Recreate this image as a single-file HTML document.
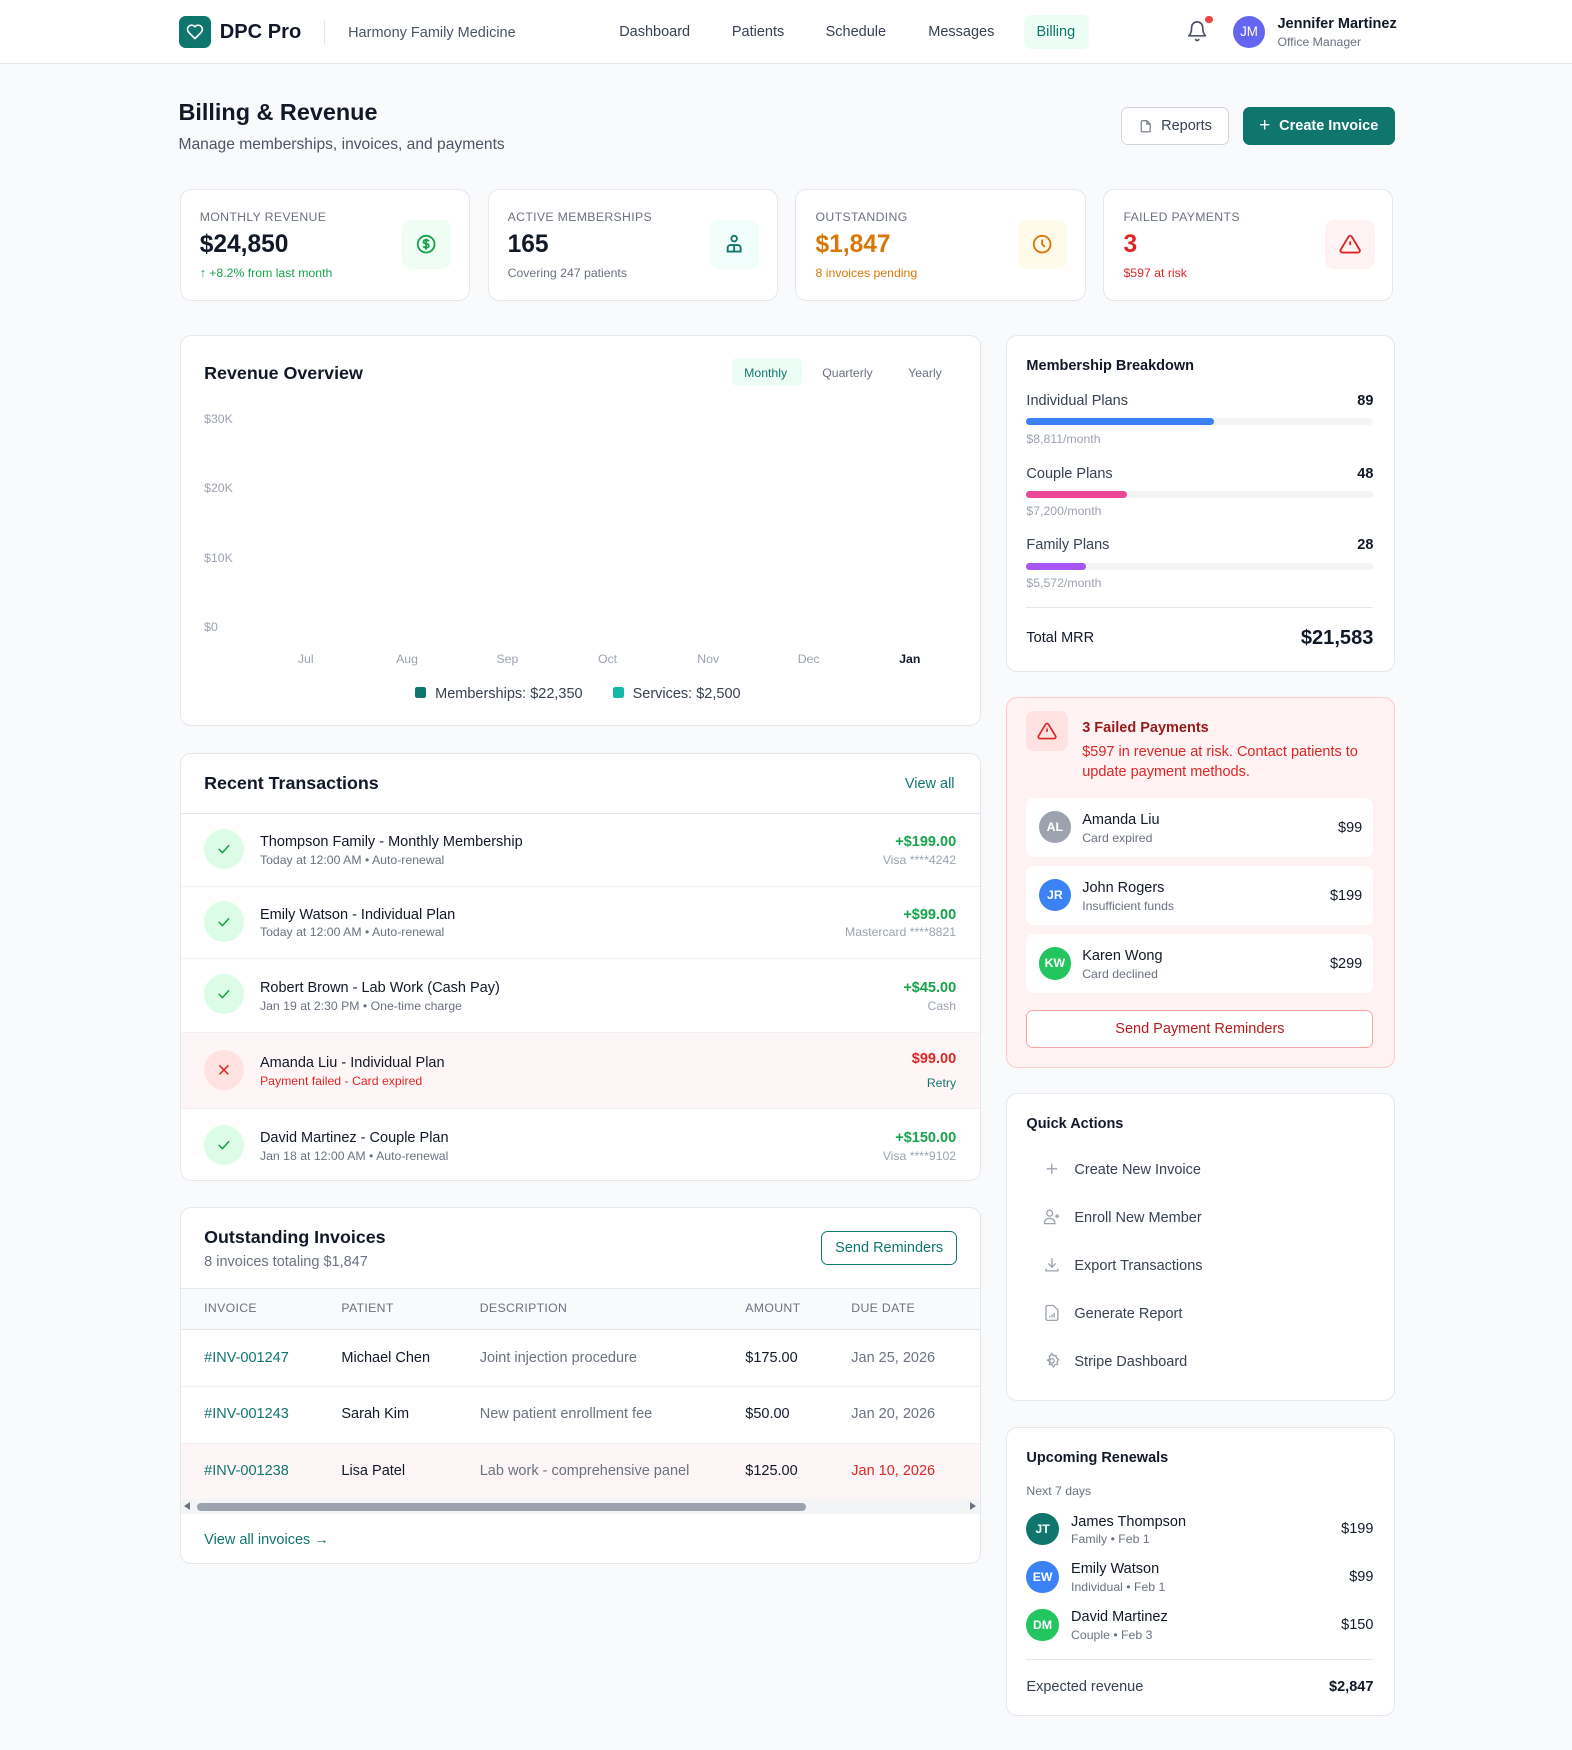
<!DOCTYPE html>
<html><head><meta charset="utf-8">
<style>
*{box-sizing:border-box;margin:0;padding:0}
html,body{width:1572px;height:1750px;overflow:hidden;background:#f9fafb}
body{font-family:"Liberation Sans",Arial,sans-serif;color:#111827}
#r{position:relative;width:1409px;height:1568px;zoom:1.11568}
.a{position:absolute}
.t{position:absolute;white-space:nowrap;line-height:20px;transform:translateY(1px)}
.card{position:absolute;background:#fff;border:1px solid #e5e7eb;border-radius:10px}
.g{color:#6b7280}
.b{font-weight:bold}
.ic{position:absolute;width:44px;height:44px;border-radius:8px;display:flex;align-items:center;justify-content:center}
.lbl{font-size:11px;color:#6b7280;letter-spacing:.3px}
.circ{position:absolute;width:36px;height:36px;border-radius:50%;display:flex;align-items:center;justify-content:center}
.av{position:absolute;border-radius:50%;color:#fff;font-weight:bold;display:flex;align-items:center;justify-content:center}
.hr{position:absolute;height:1px;background:#f0f1f3}
</style></head><body><div id="r">

<div class="a" style="left:0;top:0;width:1409px;height:57px;background:#fff;border-bottom:1px solid #e5e7eb"></div>
<div class="a" style="left:160px;top:14px;width:29px;height:29px;background:#0f766e;border-radius:6px;display:flex;align-items:center;justify-content:center">
<svg width="16" height="16" viewBox="0 0 24 24" fill="none" stroke="#fff" stroke-width="2.2" stroke-linecap="round" stroke-linejoin="round"><path d="M19 14c1.5-1.5 3-3.2 3-5.5A5.5 5.5 0 0 0 16.5 3c-1.8 0-3 .5-4.5 2-1.5-1.5-2.7-2-4.5-2A5.5 5.5 0 0 0 2 8.5c0 2.3 1.5 4 3 5.5l7 7Z"/></svg></div>
<div class="t b" style="left:197px;top:18px;font-size:18px">DPC Pro</div>
<div class="a" style="left:290px;top:18px;width:1px;height:22px;background:#e5e7eb"></div>
<div class="t g" style="left:312px;top:19px;font-size:13px;color:#4b5563">Harmony Family Medicine</div>
<div class="t" style="left:555px;top:18px;font-size:13px;color:#374151">Dashboard</div>
<div class="t" style="left:656px;top:18px;font-size:13px;color:#374151">Patients</div>
<div class="t" style="left:740px;top:18px;font-size:13px;color:#374151">Schedule</div>
<div class="t" style="left:832px;top:18px;font-size:13px;color:#374151">Messages</div>
<div class="a" style="left:918px;top:13px;width:58px;height:31px;background:#ecfdf5;border-radius:6px"></div>
<div class="t" style="left:929px;top:18px;font-size:13px;color:#0f766e">Billing</div>
<svg class="a" style="left:1063px;top:18px" width="20" height="20" viewBox="0 0 24 24" fill="none" stroke="#4b5563" stroke-width="1.8" stroke-linecap="round" stroke-linejoin="round"><path d="M6 8a6 6 0 0 1 12 0c0 7 3 9 3 9H3s3-2 3-9"/><path d="M10.3 21a1.9 1.9 0 0 0 3.4 0"/></svg>
<div class="a" style="left:1080px;top:14px;width:7px;height:7px;border-radius:50%;background:#ef4444"></div>
<div class="av" style="left:1105px;top:14px;width:29px;height:29px;background:#6366f1;font-size:12px;font-weight:normal">JM</div>
<div class="t b" style="left:1145px;top:11px;font-size:13px;color:#111827">Jennifer Martinez</div>
<div class="t g" style="left:1145px;top:27px;font-size:11px">Office Manager</div>

<div class="t b" style="left:160px;top:88px;font-size:21px;line-height:24px">Billing &amp; Revenue</div>
<div class="t" style="left:160px;top:119px;font-size:14px;color:#4b5563">Manage memberships, invoices, and payments</div>
<div class="a" style="left:1005px;top:96px;width:97px;height:34px;border:1px solid #d1d5db;border-radius:6px;background:#fff;display:flex;align-items:center;justify-content:center;gap:8px;font-size:13px;color:#374151">
<svg width="12" height="13" viewBox="0 0 24 24" fill="none" stroke="#6b7280" stroke-width="2"><path d="M14 2H6a2 2 0 0 0-2 2v16a2 2 0 0 0 2 2h12a2 2 0 0 0 2-2V8z"/><path d="M14 2v6h6"/></svg>Reports</div>
<div class="a" style="left:1114px;top:96px;width:136px;height:34px;border-radius:6px;background:#0f766e;display:flex;align-items:center;justify-content:center;gap:8px;font-size:13px;color:#fff;font-weight:bold">
<span style="font-size:17px;font-weight:normal">+</span>Create Invoice</div>

<div class="card" style="left:161px;top:169px;width:260px;height:101px"></div>
<div class="t lbl" style="left:179px;top:184px">MONTHLY REVENUE</div>
<div class="t b" style="left:179px;top:207px;font-size:22px;line-height:24px">$24,850</div>
<div class="t" style="left:179px;top:234px;font-size:11px;color:#16a34a">↑ +8.2% from last month</div>
<div class="ic" style="left:360px;top:197px;background:#f0fdf4"><svg width="20" height="20" viewBox="0 0 24 24" fill="none" stroke="#16a34a" stroke-width="2"><circle cx="12" cy="12" r="9"/><path d="M15 9c-.5-1-1.5-1.5-3-1.5-1.7 0-2.8.8-2.8 2s1 1.7 2.8 2c1.8.3 2.9.9 2.9 2.2s-1.2 2.1-2.9 2.1c-1.5 0-2.6-.6-3-1.6M12 6v12"/></svg></div>

<div class="card" style="left:437px;top:169px;width:260px;height:101px"></div>
<div class="t lbl" style="left:455px;top:184px">ACTIVE MEMBERSHIPS</div>
<div class="t b" style="left:455px;top:207px;font-size:22px;line-height:24px">165</div>
<div class="t g" style="left:455px;top:234px;font-size:11px">Covering 247 patients</div>
<div class="ic" style="left:636px;top:197px;background:#f0fdfa"><svg width="20" height="20" viewBox="0 0 24 24" fill="none" stroke="#0f766e" stroke-width="2"><circle cx="12" cy="6" r="3"/><path d="M5 20v-4a3 3 0 0 1 3-3h8a3 3 0 0 1 3 3v4zM12 13v7"/></svg></div>

<div class="card" style="left:713px;top:169px;width:260px;height:101px"></div>
<div class="t lbl" style="left:731px;top:184px">OUTSTANDING</div>
<div class="t b" style="left:731px;top:207px;font-size:22px;line-height:24px;color:#d97706">$1,847</div>
<div class="t" style="left:731px;top:234px;font-size:11px;color:#d97706">8 invoices pending</div>
<div class="ic" style="left:912px;top:197px;background:#fffbeb"><svg width="20" height="20" viewBox="0 0 24 24" fill="none" stroke="#d97706" stroke-width="2"><circle cx="12" cy="12" r="9"/><path d="M12 7v5l3 3"/></svg></div>

<div class="card" style="left:989px;top:169px;width:260px;height:101px"></div>
<div class="t lbl" style="left:1007px;top:184px">FAILED PAYMENTS</div>
<div class="t b" style="left:1007px;top:207px;font-size:22px;line-height:24px;color:#dc2626">3</div>
<div class="t" style="left:1007px;top:234px;font-size:11px;color:#dc2626">$597 at risk</div>
<div class="ic" style="left:1188px;top:197px;background:#fef2f2"><svg width="20" height="20" viewBox="0 0 24 24" fill="none" stroke="#dc2626" stroke-width="2"><path d="M10.3 3.9 1.8 18a2 2 0 0 0 1.7 3h17a2 2 0 0 0 1.7-3L13.7 3.9a2 2 0 0 0-3.4 0zM12 9v4M12 17h.01"/></svg></div>

<div class="card" style="left:161px;top:300px;width:718px;height:351px"></div>
<div class="t b" style="left:183px;top:324px;font-size:16px">Revenue Overview</div>
<div class="a" style="left:656px;top:321px;width:63px;height:25px;background:#ecfdf5;border-radius:5px"></div>
<div class="t" style="left:667px;top:324px;font-size:11px;color:#0f766e">Monthly</div>
<div class="t g" style="left:737px;top:324px;font-size:11px">Quarterly</div>
<div class="t g" style="left:814px;top:324px;font-size:11px">Yearly</div>
<div class="t" style="left:183px;top:365px;font-size:11px;color:#9ca3af">$30K</div>
<div class="t" style="left:183px;top:427px;font-size:11px;color:#9ca3af">$20K</div>
<div class="t" style="left:183px;top:489px;font-size:11px;color:#9ca3af">$10K</div>
<div class="t" style="left:183px;top:551px;font-size:11px;color:#9ca3af">$0</div>
<div class="t" style="left:267px;top:580px;font-size:11px;color:#9ca3af">Jul</div>
<div class="t" style="left:355px;top:580px;font-size:11px;color:#9ca3af">Aug</div>
<div class="t" style="left:445px;top:580px;font-size:11px;color:#9ca3af">Sep</div>
<div class="t" style="left:536px;top:580px;font-size:11px;color:#9ca3af">Oct</div>
<div class="t" style="left:625px;top:580px;font-size:11px;color:#9ca3af">Nov</div>
<div class="t" style="left:715px;top:580px;font-size:11px;color:#9ca3af">Dec</div>
<div class="t b" style="left:806px;top:580px;font-size:11px;color:#111827">Jan</div>
<div class="a" style="left:372px;top:616px;width:10px;height:10px;border-radius:2px;background:#0f766e"></div>
<div class="t" style="left:390px;top:611px;font-size:13px;color:#374151">Memberships: $22,350</div>
<div class="a" style="left:549px;top:616px;width:10px;height:10px;border-radius:2px;background:#14b8a6"></div>
<div class="t" style="left:567px;top:611px;font-size:13px;color:#374151">Services: $2,500</div>

<div class="card" style="left:161px;top:675px;width:718px;height:384px;overflow:hidden">
<div class="a" style="left:0;top:250px;width:718px;height:68px;background:#fef6f6"></div>
</div>
<div class="t b" style="left:183px;top:691px;font-size:16px">Recent Transactions</div>
<div class="t" style="left:811px;top:692px;font-size:13px;color:#0f766e">View all</div>
<div class="hr" style="left:162px;top:729px;width:716px;background:#e5e7eb"></div>
<div class="hr" style="left:162px;top:794px;width:716px"></div>
<div class="hr" style="left:162px;top:859px;width:716px"></div>
<div class="hr" style="left:162px;top:925px;width:716px"></div>
<div class="hr" style="left:162px;top:993px;width:716px"></div>

<div class="circ" style="left:183px;top:743px;background:#dcfce7"><svg width="16" height="16" viewBox="0 0 24 24" fill="none" stroke="#16a34a" stroke-width="2"><path d="M5 12l5 5 9-10"/></svg></div>
<div class="t" style="left:233px;top:744px;font-size:13px">Thompson Family - Monthly Membership</div>
<div class="t g" style="left:233px;top:760px;font-size:11px">Today at 12:00 AM • Auto-renewal</div>
<div class="t b" style="right:552px;top:744px;font-size:13px;color:#16a34a">+$199.00</div>
<div class="t" style="right:552px;top:760px;font-size:11px;color:#9ca3af">Visa ****4242</div>

<div class="circ" style="left:183px;top:808px;background:#dcfce7"><svg width="16" height="16" viewBox="0 0 24 24" fill="none" stroke="#16a34a" stroke-width="2"><path d="M5 12l5 5 9-10"/></svg></div>
<div class="t" style="left:233px;top:809px;font-size:13px">Emily Watson - Individual Plan</div>
<div class="t g" style="left:233px;top:825px;font-size:11px">Today at 12:00 AM • Auto-renewal</div>
<div class="t b" style="right:552px;top:809px;font-size:13px;color:#16a34a">+$99.00</div>
<div class="t" style="right:552px;top:825px;font-size:11px;color:#9ca3af">Mastercard ****8821</div>

<div class="circ" style="left:183px;top:873px;background:#dcfce7"><svg width="16" height="16" viewBox="0 0 24 24" fill="none" stroke="#16a34a" stroke-width="2"><path d="M5 12l5 5 9-10"/></svg></div>
<div class="t" style="left:233px;top:875px;font-size:13px">Robert Brown - Lab Work (Cash Pay)</div>
<div class="t g" style="left:233px;top:891px;font-size:11px">Jan 19 at 2:30 PM • One-time charge</div>
<div class="t b" style="right:552px;top:875px;font-size:13px;color:#16a34a">+$45.00</div>
<div class="t" style="right:552px;top:891px;font-size:11px;color:#9ca3af">Cash</div>

<div class="circ" style="left:183px;top:941px;background:#fee2e2"><svg width="16" height="16" viewBox="0 0 24 24" fill="none" stroke="#dc2626" stroke-width="2"><path d="M6 6l12 12M18 6 6 18"/></svg></div>
<div class="t" style="left:233px;top:942px;font-size:13px">Amanda Liu - Individual Plan</div>
<div class="t" style="left:233px;top:958px;font-size:11px;color:#dc2626">Payment failed - Card expired</div>
<div class="t b" style="right:552px;top:938px;font-size:13px;color:#dc2626">$99.00</div>
<div class="t" style="right:552px;top:960px;font-size:11px;color:#0f766e">Retry</div>

<div class="circ" style="left:183px;top:1008px;background:#dcfce7"><svg width="16" height="16" viewBox="0 0 24 24" fill="none" stroke="#16a34a" stroke-width="2"><path d="M5 12l5 5 9-10"/></svg></div>
<div class="t" style="left:233px;top:1009px;font-size:13px">David Martinez - Couple Plan</div>
<div class="t g" style="left:233px;top:1025px;font-size:11px">Jan 18 at 12:00 AM • Auto-renewal</div>
<div class="t b" style="right:552px;top:1009px;font-size:13px;color:#16a34a">+$150.00</div>
<div class="t" style="right:552px;top:1025px;font-size:11px;color:#9ca3af">Visa ****9102</div>

<div class="card" style="left:161px;top:1082px;width:718px;height:320px;overflow:hidden">
<div class="a" style="left:0;top:72px;width:718px;height:37px;background:#f9fafb;border-top:1px solid #e5e7eb;border-bottom:1px solid #e5e7eb"></div>
<div class="a" style="left:0;top:211px;width:718px;height:51px;background:#fef6f6"></div>
</div>
<div class="t b" style="left:183px;top:1098px;font-size:16px">Outstanding Invoices</div>
<div class="t g" style="left:183px;top:1120px;font-size:13px">8 invoices totaling $1,847</div>
<div class="a" style="left:736px;top:1103px;width:122px;height:31px;border:1px solid #0f766e;border-radius:6px;color:#0f766e;font-size:13px;display:flex;align-items:center;justify-content:center">Send Reminders</div>
<div class="t lbl" style="left:183px;top:1162px">INVOICE</div>
<div class="t lbl" style="left:306px;top:1162px">PATIENT</div>
<div class="t lbl" style="left:430px;top:1162px">DESCRIPTION</div>
<div class="t lbl" style="left:668px;top:1162px">AMOUNT</div>
<div class="t lbl" style="left:763px;top:1162px">DUE DATE</div>
<div class="hr" style="left:162px;top:1242px;width:716px"></div>
<div class="hr" style="left:162px;top:1293px;width:716px"></div>
<div class="t" style="left:183px;top:1206px;font-size:13px;color:#0f766e">#INV-001247</div>
<div class="t" style="left:306px;top:1206px;font-size:13px">Michael Chen</div>
<div class="t" style="left:430px;top:1206px;font-size:13px;color:#6b7280">Joint injection procedure</div>
<div class="t" style="left:668px;top:1206px;font-size:13px">$175.00</div>
<div class="t" style="left:763px;top:1206px;font-size:13px;color:#6b7280">Jan 25, 2026</div>
<div class="t" style="left:183px;top:1257px;font-size:13px;color:#0f766e">#INV-001243</div>
<div class="t" style="left:306px;top:1257px;font-size:13px">Sarah Kim</div>
<div class="t" style="left:430px;top:1257px;font-size:13px;color:#6b7280">New patient enrollment fee</div>
<div class="t" style="left:668px;top:1257px;font-size:13px">$50.00</div>
<div class="t" style="left:763px;top:1257px;font-size:13px;color:#6b7280">Jan 20, 2026</div>
<div class="t" style="left:183px;top:1308px;font-size:13px;color:#0f766e">#INV-001238</div>
<div class="t" style="left:306px;top:1308px;font-size:13px">Lisa Patel</div>
<div class="t" style="left:430px;top:1308px;font-size:13px;color:#6b7280">Lab work - comprehensive panel</div>
<div class="t" style="left:668px;top:1308px;font-size:13px">$125.00</div>
<div class="t" style="left:763px;top:1308px;font-size:13px;color:#dc2626">Jan 10, 2026</div>
<div class="a" style="left:162px;top:1344px;width:716px;height:13px;background:#f3f4f6"></div>
<div class="a" style="left:177px;top:1347px;width:545px;height:7px;background:#9ca3af;border-radius:4px"></div>
<div class="a" style="left:165px;top:1346px;width:0;height:0;border-top:4px solid transparent;border-bottom:4px solid transparent;border-right:6px solid #6b7280"></div>
<div class="a" style="left:869px;top:1346px;width:0;height:0;border-top:4px solid transparent;border-bottom:4px solid transparent;border-left:6px solid #6b7280"></div>
<div class="t" style="left:183px;top:1370px;font-size:13px;color:#0f766e">View all invoices →</div>

<div class="card" style="left:902px;top:300px;width:348px;height:302px"></div>
<div class="t b" style="left:920px;top:317px;font-size:13px">Membership Breakdown</div>
<div class="t" style="left:920px;top:349px;font-size:13px;color:#374151">Individual Plans</div>
<div class="t b" style="right:178px;top:349px;font-size:13px">89</div>
<div class="a" style="left:920px;top:375px;width:311px;height:6px;background:#f3f4f6;border-radius:3px"><div style="width:168px;height:6px;background:#3b82f6;border-radius:3px"></div></div>
<div class="t" style="left:920px;top:383px;font-size:11px;color:#9ca3af">$8,811/month</div>
<div class="t" style="left:920px;top:414px;font-size:13px;color:#374151">Couple Plans</div>
<div class="t b" style="right:178px;top:414px;font-size:13px">48</div>
<div class="a" style="left:920px;top:440px;width:311px;height:6px;background:#f3f4f6;border-radius:3px"><div style="width:90px;height:6px;background:#ec4899;border-radius:3px"></div></div>
<div class="t" style="left:920px;top:447px;font-size:11px;color:#9ca3af">$7,200/month</div>
<div class="t" style="left:920px;top:478px;font-size:13px;color:#374151">Family Plans</div>
<div class="t b" style="right:178px;top:478px;font-size:13px">28</div>
<div class="a" style="left:920px;top:505px;width:311px;height:6px;background:#f3f4f6;border-radius:3px"><div style="width:53px;height:6px;background:#a855f7;border-radius:3px"></div></div>
<div class="t" style="left:920px;top:512px;font-size:11px;color:#9ca3af">$5,572/month</div>
<div class="hr" style="left:920px;top:544px;width:311px;background:#e5e7eb"></div>
<div class="t" style="left:920px;top:561px;font-size:13px">Total MRR</div>
<div class="t b" style="right:178px;top:561px;font-size:18px">$21,583</div>

<div class="a" style="left:902px;top:625px;width:348px;height:332px;background:#fef2f2;border:1px solid #fecaca;border-radius:10px"></div>
<div class="a" style="left:920px;top:637px;width:37px;height:36px;background:#fee2e2;border-radius:7px;display:flex;align-items:center;justify-content:center"><svg width="18" height="18" viewBox="0 0 24 24" fill="none" stroke="#dc2626" stroke-width="2"><path d="M10.3 3.9 1.8 18a2 2 0 0 0 1.7 3h17a2 2 0 0 0 1.7-3L13.7 3.9a2 2 0 0 0-3.4 0zM12 9v4M12 17h.01"/></svg></div>
<div class="t b" style="left:970px;top:642px;font-size:13px;color:#991b1b">3 Failed Payments</div>
<div class="a" style="left:970px;top:665px;width:270px;font-size:13px;line-height:18px;color:#dc2626">$597 in revenue at risk. Contact patients to update payment methods.</div>
<div class="a" style="left:920px;top:715px;width:311px;height:53px;background:#fff;border-radius:7px"></div>
<div class="av" style="left:931px;top:727px;width:29px;height:29px;background:#9ca3af;font-size:11px">AL</div>
<div class="t" style="left:970px;top:724px;font-size:13px">Amanda Liu</div>
<div class="t g" style="left:970px;top:740px;font-size:11px">Card expired</div>
<div class="t" style="right:188px;top:731px;font-size:13px">$99</div>
<div class="a" style="left:920px;top:776px;width:311px;height:53px;background:#fff;border-radius:7px"></div>
<div class="av" style="left:931px;top:788px;width:29px;height:29px;background:#3b82f6;font-size:11px">JR</div>
<div class="t" style="left:970px;top:785px;font-size:13px">John Rogers</div>
<div class="t g" style="left:970px;top:801px;font-size:11px">Insufficient funds</div>
<div class="t" style="right:188px;top:792px;font-size:13px">$199</div>
<div class="a" style="left:920px;top:837px;width:311px;height:53px;background:#fff;border-radius:7px"></div>
<div class="av" style="left:931px;top:849px;width:29px;height:29px;background:#22c55e;font-size:11px">KW</div>
<div class="t" style="left:970px;top:846px;font-size:13px">Karen Wong</div>
<div class="t g" style="left:970px;top:862px;font-size:11px">Card declined</div>
<div class="t" style="right:188px;top:853px;font-size:13px">$299</div>
<div class="a" style="left:920px;top:905px;width:311px;height:34px;background:#fff;border:1px solid #fca5a5;border-radius:6px;display:flex;align-items:center;justify-content:center;font-size:13px;color:#b91c1c">Send Payment Reminders</div>

<div class="card" style="left:902px;top:980px;width:348px;height:276px"></div>
<div class="t b" style="left:920px;top:997px;font-size:13px">Quick Actions</div>
<svg class="a" style="left:936px;top:1041px" width="14" height="14" viewBox="0 0 24 24" fill="none" stroke="#9ca3af" stroke-width="2"><path d="M12 4v16M4 12h16"/></svg>
<div class="t" style="left:963px;top:1038px;font-size:13px;color:#374151">Create New Invoice</div>
<svg class="a" style="left:935px;top:1083px" width="16" height="16" viewBox="0 0 24 24" fill="none" stroke="#9ca3af" stroke-width="1.8"><circle cx="9" cy="7" r="4"/><path d="M2 21v-1a6 6 0 0 1 6-6h2a6 6 0 0 1 6 6v1zM19 8v6M16 11h6"/></svg>
<div class="t" style="left:963px;top:1081px;font-size:13px;color:#374151">Enroll New Member</div>
<svg class="a" style="left:935px;top:1126px" width="16" height="16" viewBox="0 0 24 24" fill="none" stroke="#9ca3af" stroke-width="1.8"><path d="M12 3v12M7 10l5 5 5-5M4 17v3h16v-3"/></svg>
<div class="t" style="left:963px;top:1124px;font-size:13px;color:#374151">Export Transactions</div>
<svg class="a" style="left:935px;top:1169px" width="16" height="16" viewBox="0 0 24 24" fill="none" stroke="#9ca3af" stroke-width="1.8"><path d="M14 2H6a2 2 0 0 0-2 2v16a2 2 0 0 0 2 2h12a2 2 0 0 0 2-2V8z"/><path d="M9 18v-2M12 18v-4M15 18v-6"/></svg>
<div class="t" style="left:963px;top:1167px;font-size:13px;color:#374151">Generate Report</div>
<svg class="a" style="left:935px;top:1212px" width="16" height="16" viewBox="0 0 24 24" fill="none" stroke="#9ca3af" stroke-width="1.8"><circle cx="12" cy="12" r="3"/><path d="M12 2l2 3 3.5-.5.5 3.5 3 2-2 3 .5 3.5-3.5.5-2 3-2-3-3.5-.5.5-3.5-3-2 3-2-.5-3.5L10 5z"/></svg>
<div class="t" style="left:963px;top:1210px;font-size:13px;color:#374151">Stripe Dashboard</div>

<div class="card" style="left:902px;top:1279px;width:348px;height:259px"></div>
<div class="t b" style="left:920px;top:1296px;font-size:13px">Upcoming Renewals</div>
<div class="t g" style="left:920px;top:1326px;font-size:11px">Next 7 days</div>
<div class="av" style="left:920px;top:1356px;width:29px;height:29px;background:#0f766e;font-size:11px">JT</div>
<div class="t" style="left:960px;top:1353px;font-size:13px">James Thompson</div>
<div class="t g" style="left:960px;top:1369px;font-size:11px">Family • Feb 1</div>
<div class="t" style="right:178px;top:1360px;font-size:13px">$199</div>
<div class="av" style="left:920px;top:1399px;width:29px;height:29px;background:#3b82f6;font-size:11px">EW</div>
<div class="t" style="left:960px;top:1396px;font-size:13px">Emily Watson</div>
<div class="t g" style="left:960px;top:1412px;font-size:11px">Individual • Feb 1</div>
<div class="t" style="right:178px;top:1403px;font-size:13px">$99</div>
<div class="av" style="left:920px;top:1442px;width:29px;height:29px;background:#22c55e;font-size:11px">DM</div>
<div class="t" style="left:960px;top:1439px;font-size:13px">David Martinez</div>
<div class="t g" style="left:960px;top:1455px;font-size:11px">Couple • Feb 3</div>
<div class="t" style="right:178px;top:1446px;font-size:13px">$150</div>
<div class="hr" style="left:920px;top:1487px;width:311px;background:#e5e7eb"></div>
<div class="t" style="left:920px;top:1501px;font-size:13px;color:#374151">Expected revenue</div>
<div class="t b" style="right:178px;top:1501px;font-size:13px">$2,847</div>

</div></body></html>
